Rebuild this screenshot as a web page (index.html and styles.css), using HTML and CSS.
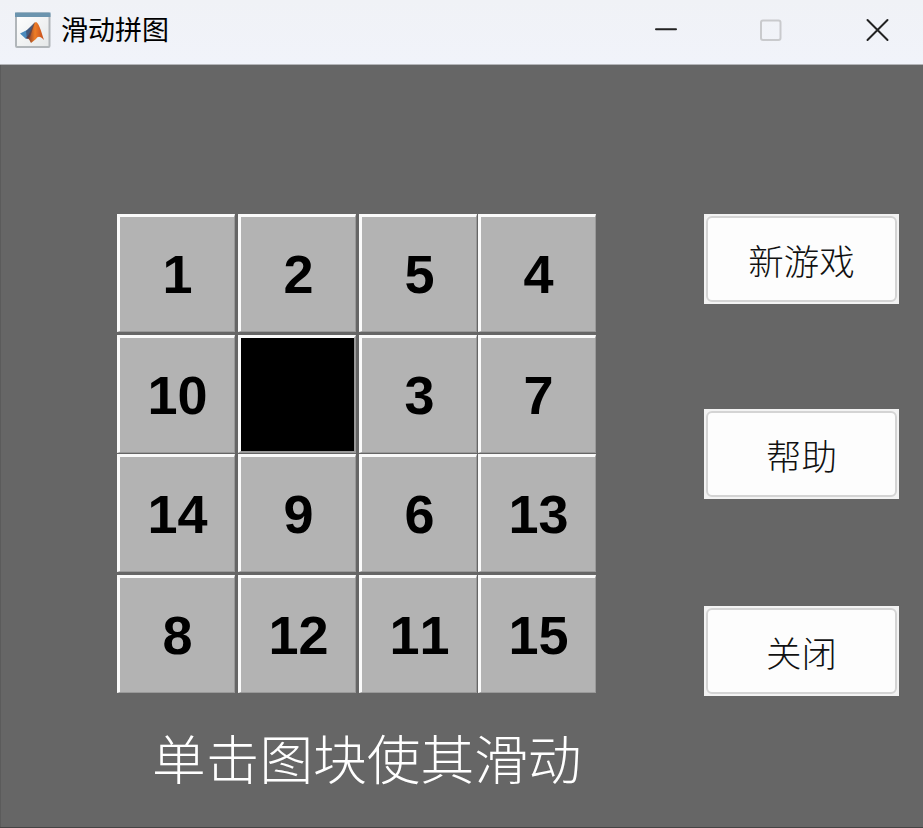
FILE: index.html
```html
<!DOCTYPE html>
<html lang="zh-CN">
<head>
<meta charset="utf-8">
<title>滑动拼图</title>
<link rel="stylesheet" href="styles.css">
</head>
<body>
<div class="window">
  <header class="titlebar">
    <svg class="logo" width="38" height="38" viewBox="0 0 38 38">
      <defs>
        <linearGradient id="frame" x1="0" y1="0" x2="1" y2="1"><stop offset="0" stop-color="#fff"/><stop offset="1" stop-color="#e4e7e8"/></linearGradient>
        <linearGradient id="flame" x1="0" y1="0" x2="1" y2="0"><stop offset="0" stop-color="#6c2c2a"/><stop offset=".5" stop-color="#ee7d25"/><stop offset="1" stop-color="#c44a1c"/></linearGradient>
      </defs>
      <rect x="2" y="2.500" width="33.500" height="33.500" rx="1" fill="url(#frame)" stroke="#b1b6ba" stroke-width="2"/>
      <path d="M1 1.500h35.500v4.500H1z" fill="#6b94ae"/>
      <path d="M6 22.500l7-3.500 8-7-4 15-5 1z" fill="#4a8abd"/>
      <path d="M12 27c5-4 6-15 10-16 3 1 5 9 8 18-4-4-6-4-8-1l-5 4c-1-2-2-5-5-5z" fill="url(#flame)"/>
      <path d="M12 20l9-9-5 15-3 2z" fill="#3c3b55" opacity=".6"/>
    </svg>
    <h1 class="title">滑动拼图</h1>
    <svg class="controls" width="236" height="24" viewBox="0 0 236 24" fill="none">
      <path d="M1 11.300h20" stroke="#222" stroke-width="2" stroke-linecap="round"/>
      <rect x="106" y="2.500" width="19.500" height="19.500" rx="2" stroke="#c9cacd" stroke-width="2"/>
      <path d="M212.500 2l20 20m0-20l-20 20" stroke="#222" stroke-width="2" stroke-linecap="round"/>
    </svg>
  </header>
  <main class="game">
    <section class="play">
      <div class="board">
        <div class="tile">1</div><div class="tile">2</div><div class="tile">5</div><div class="tile">4</div>
        <div class="tile">10</div><div class="tile empty"></div><div class="tile">3</div><div class="tile">7</div>
        <div class="tile">14</div><div class="tile">9</div><div class="tile">6</div><div class="tile">13</div>
        <div class="tile">8</div><div class="tile">12</div><div class="tile">11</div><div class="tile">15</div>
      </div>
      <p class="hint">单击图块使其滑动</p>
    </section>
    <nav class="actions">
      <button class="action"><span>新游戏</span></button>
      <button class="action"><span>帮助</span></button>
      <button class="action"><span>关闭</span></button>
    </nav>
  </main>
</div>
</body>
</html>
```
FILE: styles.css
```css
* { box-sizing: border-box; }
body { margin: 0; background: #666; font-family: "Liberation Sans", "Noto Sans CJK SC", sans-serif; }
.window { display: flex; flex-direction: column; width: 923px; height: 828px; overflow: hidden; background: #666; border-bottom: 1px solid #444; }
.titlebar { display: flex; align-items: center; flex: none; height: 65px; padding: 0 32px 4px 14px; background: linear-gradient(#f0f2f6, #f1f3fa); border-bottom: 1px solid #b4b5b9; }
.logo { flex: none; }
.title { margin: 0 0 2px 9px; font: 400 27px/40px "Noto Sans CJK SC", sans-serif; color: #000; white-space: nowrap; }
.controls { margin-left: auto; }
.game { display: flex; flex: 1; justify-content: space-between; padding: 149px 24px 0 116px; border-left: 1px solid #5b5b5b; }
.play { width: 480px; }
.board { display: grid; grid-template-columns: 121px 121px 119px 118px; grid-template-rows: 121px 119px 121px 118px; }
.tile { display: flex; align-items: center; justify-content: center; width: 118px; height: 118px; padding: 0 1px 1px 2px; background: #b3b3b3; border-style: solid; border-width: 3px 1px 1px 3px; border-color: #fafafa #999 #999 #fafafa; color: #000; font: 700 54px/1 "Liberation Sans", Arial, sans-serif; font-kerning: none; }
.empty { background: #000; border-width: 3px 2px 2px 3px; }
.hint { margin: 24px 0 0 35px; color: #fff; font: 300 53.700px/80px "Noto Sans CJK SC", sans-serif; white-space: nowrap; }
.actions { display: flex; flex-direction: column; width: 195px; }
.action { display: flex; width: 195px; height: 90px; margin: 0 0 105px; padding: 2px; border: 0; background: #f3f3f3; color: #111; font: 300 35.500px/1 "Noto Sans CJK SC", sans-serif; }
.action:nth-child(2) { margin-bottom: 107px; }
.action span { display: flex; flex: 1; align-items: center; justify-content: center; height: 86px; padding-top: 1px; background: #fdfdfd; border: 2px solid #d4d4d4; border-radius: 6px; }
```
